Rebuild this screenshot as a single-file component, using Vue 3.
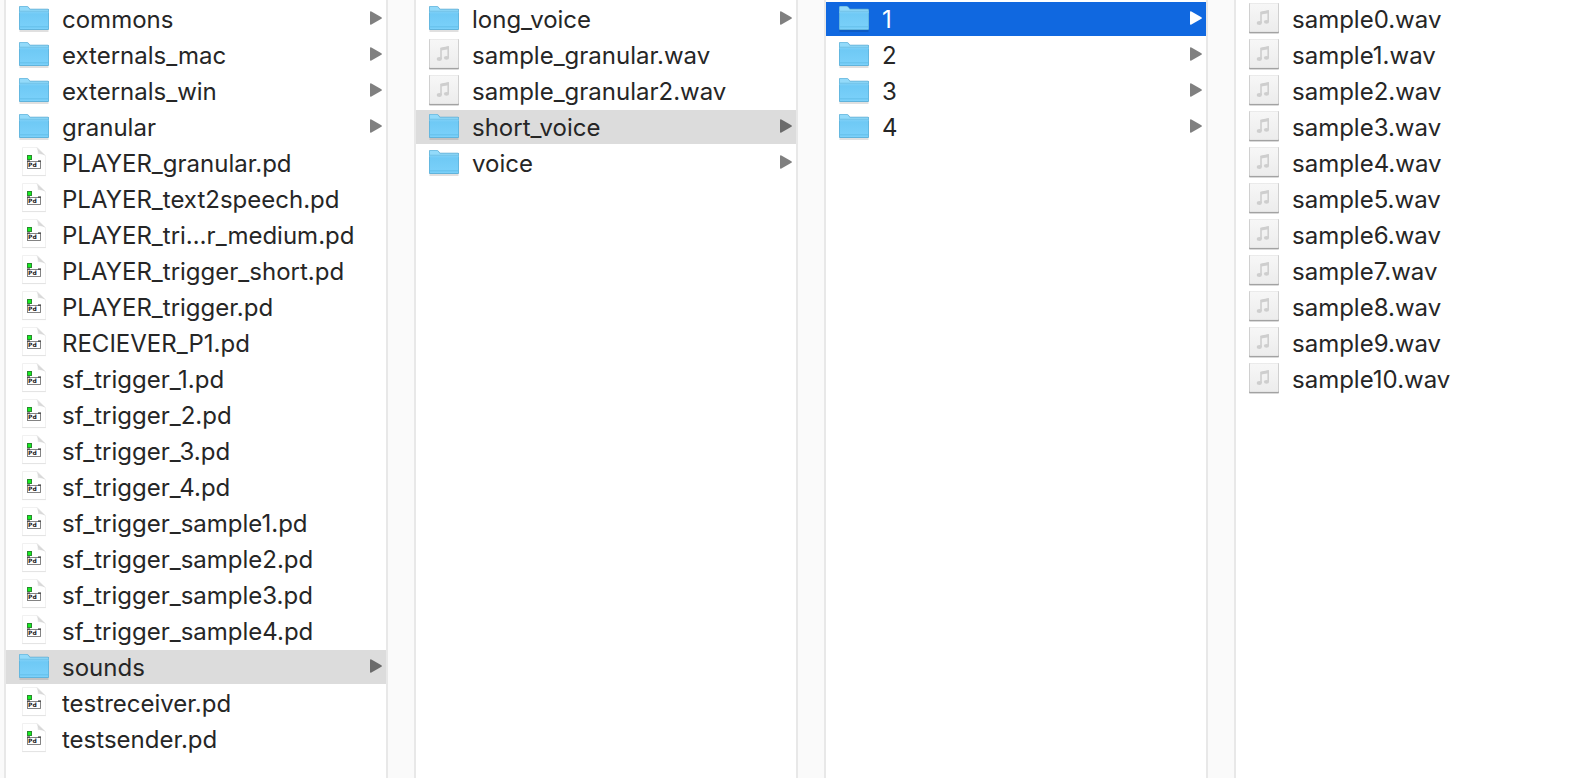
<template>
  <main class="browser">
    <!-- shared icon shapes -->
    <svg class="sprite" aria-hidden="true">
      <defs>
        <linearGradient id="folder-front" x1="0" y1="0" x2="0" y2="1">
          <stop offset="0" stop-color="#7fd0f7" />
          <stop offset="0.15" stop-color="#6fc9f5" />
          <stop offset="1" stop-color="#7bd1fa" />
        </linearGradient>
        <linearGradient id="audio-page" x1="0" y1="0" x2="0" y2="1">
          <stop offset="0" stop-color="#f7f7f7" />
          <stop offset="1" stop-color="#ececec" />
        </linearGradient>
        <linearGradient id="page-fold" x1="0" y1="1" x2="1" y2="0">
          <stop offset="0" stop-color="#fafafa" />
          <stop offset="0.5" stop-color="#d2d2d2" />
          <stop offset="1" stop-color="#f0f0f0" />
        </linearGradient>
      </defs>
      <symbol id="icon-folder" viewBox="0 0 30 32">
        <path d="M0.5 28h29v2h-29z" fill="#000" opacity="0.12" />
        <path d="M0 5.2Q0 4 1.2 4H7.5Q8.6 4 9.3 4.8L11 6.8H28.8Q30 6.8 30 8V27Q30 28 29 28H1Q0 28 0 27Z" fill="#58a9d0" />
        <path d="M0.6 5.3Q0.6 4.6 1.3 4.6H7.5Q8.4 4.6 9 5.3L10.8 7.4H28.6Q29.4 7.4 29.4 8.2V11H0.6Z" fill="#93dafa" />
        <path d="M0.6 9.5h28.8V26.6Q29.4 27.2 28.8 27.2H1.2Q0.6 27.2 0.6 26.6Z" fill="url(#folder-front)" />
        <path d="M0.6 9.2h28.8" stroke="#62b8e0" stroke-width="0.7" />
        <path d="M0.6 24.8h28.8" stroke="#5fbae6" stroke-width="0.8" />
      </symbol>
      <symbol id="icon-audio" viewBox="0 0 30 32">
        <rect x="0" y="2.2" width="30" height="29.6" rx="1" fill="#000" opacity="0.2" />
        <rect x="0" y="1.3" width="30" height="29.7" rx="1" fill="#a2a2a2" />
        <rect x="0.3" y="1" width="29.4" height="29" rx="0.8" fill="#dedede" />
        <rect x="0.9" y="1.6" width="28.2" height="28" rx="0.5" fill="url(#audio-page)" />
        <path d="M12 20.9V10.3L19.2 9V19.6" fill="none" stroke="#cecece" stroke-width="1.6" />
        <path d="M12 11.2L19.2 9.9" stroke="#cecece" stroke-width="2.6" />
        <ellipse cx="10.3" cy="21" rx="2.6" ry="1.9" fill="#cecece" />
        <ellipse cx="17.5" cy="19.8" rx="2.6" ry="1.9" fill="#cecece" />
      </symbol>
      <symbol id="icon-patch" viewBox="0 0 30 32">
        <path d="M3.5 1.5H18.5L26.5 9.5V29.5H3.5Z" fill="#fff" stroke="#efefef" stroke-width="0.9" />
        <path d="M3.2 29.6H26.8" stroke="#dedede" stroke-width="0.8" />
        <path d="M17.5 1.5Q19.6 4 18.8 8.2Q23 7.6 26.5 9.8Z" fill="url(#page-fold)" />
        <rect x="8" y="9" width="5" height="5" fill="#2a8a2e" />
        <rect x="9" y="10" width="3" height="3" fill="#16ee22" />
        <rect x="8.5" y="15.5" width="13" height="7" fill="#fff" stroke="#777" stroke-width="0.9" />
        <path d="M8 15h3M19 15h3" stroke="#222" stroke-width="1" />
      </symbol>
      <symbol id="icon-arrow" viewBox="0 0 12 14">
        <path d="M0 1.2Q0 -0.3 1.4 0.4L11.4 6.2Q12.4 7 11.4 7.8L1.4 13.6Q0 14.3 0 12.8Z" fill="currentColor" />
      </symbol>
    </svg>

    <section
      v-for="column in columns"
      :key="column.name"
      class="column"
      :aria-label="column.name"
    >
      <ul class="list">
        <li v-for="item in column.items" :key="item">
          <button
            type="button"
            class="item"
            :class="itemState(column, item)"
            @click="column.selected = item"
          >
            <svg class="icon" aria-hidden="true">
              <use :href="'#icon-' + iconFor(item)" />
              <text v-if="iconFor(item) === 'patch'" class="patch-mark" x="9" y="21">Pd</text>
            </svg>
            <span class="label">{{ item }}</span>
            <svg v-if="iconFor(item) === 'folder'" class="arrow" aria-hidden="true">
              <use href="#icon-arrow" />
            </svg>
          </button>
        </li>
      </ul>
    </section>
  </main>
</template>

<script setup>
import { reactive } from 'vue'

const columns = reactive([
  {
    name: 'project',
    selected: 'sounds',
    items: [
      'commons',
      'externals_mac',
      'externals_win',
      'granular',
      'PLAYER_granular.pd',
      'PLAYER_text2speech.pd',
      'PLAYER_tri…r_medium.pd',
      'PLAYER_trigger_short.pd',
      'PLAYER_trigger.pd',
      'RECIEVER_P1.pd',
      'sf_trigger_1.pd',
      'sf_trigger_2.pd',
      'sf_trigger_3.pd',
      'sf_trigger_4.pd',
      'sf_trigger_sample1.pd',
      'sf_trigger_sample2.pd',
      'sf_trigger_sample3.pd',
      'sf_trigger_sample4.pd',
      'sounds',
      'testreceiver.pd',
      'testsender.pd'
    ]
  },
  {
    name: 'sounds',
    selected: 'short_voice',
    items: ['long_voice', 'sample_granular.wav', 'sample_granular2.wav', 'short_voice', 'voice']
  },
  {
    name: 'short_voice',
    selected: '1',
    active: true,
    items: ['1', '2', '3', '4']
  },
  {
    name: '1',
    selected: null,
    items: Array.from({ length: 11 }, (_, i) => `sample${i}.wav`)
  }
])

function iconFor(item) {
  if (item.endsWith('.wav')) return 'audio'
  if (item.endsWith('.pd')) return 'patch'
  return 'folder'
}

function itemState(column, item) {
  if (column.selected !== item) return ''
  return column.active ? 'active' : 'selected'
}
</script>

<style>
body {
  margin: 0;
  background: #fff;
}
</style>

<style scoped>
.browser {
  display: flex;
  min-height: 100vh;
  overflow: hidden;
  font-family: Inter, "Liberation Sans", sans-serif;
  font-size: 24px;
  color: #262626;
}

.sprite {
  position: absolute;
  width: 0;
  height: 0;
}

.column {
  display: flex;
  flex: 0 1 410px;
  min-width: 0;
}

/* divider strip to the left of each column */
.column::before {
  content: "";
  box-sizing: border-box;
  flex: 0 0 30px;
  border: solid #e8e8e8;
  border-width: 0 2px;
  background: #fafafa;
}

.column:first-of-type {
  flex-basis: 386px;
}

.column:first-of-type::before {
  flex-basis: 6px;
  border-left: 0;
}

.column:last-child {
  flex: 1 1 0;
}

.list {
  display: flex;
  flex: 1;
  flex-direction: column;
  gap: 2px;
  min-width: 0;
  margin: 0;
  padding: 2px 0;
  list-style: none;
}

.item {
  display: flex;
  align-items: flex-start;
  width: 100%;
  height: 34px;
  padding: 0 4px 0 13px;
  border: 0;
  background: none;
  color: inherit;
  font: inherit;
  line-height: 36px;
  text-align: left;
}

.icon {
  flex: none;
  width: 30px;
  height: 32px;
}

.patch-mark {
  font-family: "DejaVu Sans", sans-serif;
  font-size: 6px;
  font-weight: 700;
  fill: #222;
}

.label {
  flex: 1;
  min-width: 0;
  margin-left: 13px;
  overflow: hidden;
  white-space: nowrap;
}

.arrow {
  flex: none;
  width: 12px;
  height: 14px;
  margin-top: 9px;
  color: #808080;
}

.selected {
  background: #dcdcdc;
}

.selected .arrow {
  color: #6b6b6b;
}

.active {
  background: #1068e0;
  color: #fff;
}

.active .arrow {
  color: #fff;
}
</style>
